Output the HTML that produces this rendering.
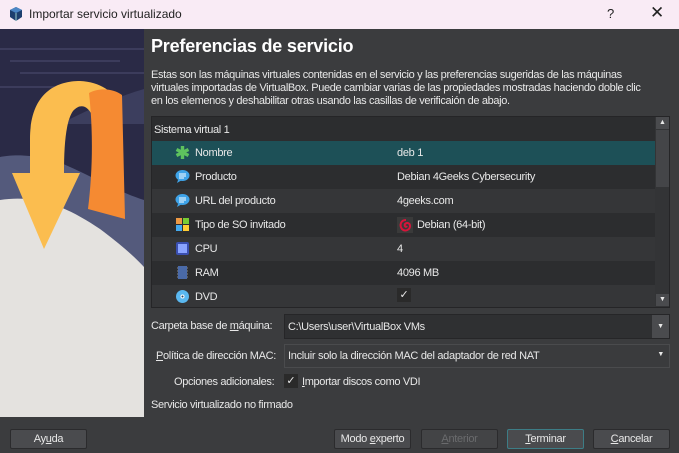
<!DOCTYPE html>
<html><head><meta charset="utf-8"><style>
*{margin:0;padding:0;box-sizing:border-box}
body{width:679px;height:453px;overflow:hidden;background:#3b3c3e;font-family:"Liberation Sans",sans-serif;font-size:11px;color:#e8e8e8;position:relative}
.a{position:absolute;white-space:nowrap}
.t{letter-spacing:-0.35px}
.title{left:0;top:0;width:679px;height:29px;background:#f9ebf5;color:#222;font-size:12px}
.row{position:absolute;left:152px;width:503px;height:24px}
.row .l{position:absolute;left:43px;top:6px;letter-spacing:-0.3px}
.row .v{position:absolute;left:245px;top:6px;letter-spacing:-0.3px}
.row .i{position:absolute;left:23px;top:4px;width:15px;height:15px}
.btn{position:absolute;top:429px;height:20px;width:77px;background:#4a4b4e;border:1px solid #2b2b2d;border-radius:2px;text-align:center;line-height:18px;letter-spacing:-0.3px}
.combo{position:absolute;left:284px;width:386px;background:#2f3032;border:1px solid #262628;letter-spacing:-0.3px}
</style></head><body>
<div class="a title">
 <svg style="position:absolute;left:8px;top:6px" width="16" height="16" viewBox="0 0 16 16"><path d="M8 1 L14 4 L14 11 L8 15 L2 11 L2 4Z" fill="#1d3f6e"/><path d="M8 1 L14 4 L8 7 L2 4Z" fill="#4b86c5"/><path d="M8 7 L8 15" stroke="#9cc" stroke-width="1"/></svg>
 <span style="position:absolute;left:29px;top:7px">Importar servicio virtualizado</span>
 <span style="position:absolute;left:607px;top:6px;font-size:13px">?</span>
 <span style="position:absolute;left:650px;top:3px;font-size:17px">✕</span>
</div>
<svg class="a" style="left:0;top:29px" width="144" height="388" viewBox="0 0 144 388">
 <rect width="144" height="388" fill="#e4e2df"/>
 <path d="M0 0H144V238C135 228 120 215 100 200 70 180 40 165 0 171Z" fill="#545a7c"/>
 <path d="M0 0H144V171C110 160 80 140 50 130 25 125 10 126 0 128Z" fill="#2a2a46"/>
 <path d="M144 60C110 70 80 85 60 95L144 95Z" fill="#3c3e5e"/>
 <path d="M0 20 H144 M10 32 H120 M20 44 H144 M0 58 H100" stroke="#6a6a8f" stroke-width="1.5" opacity=".4"/>
 <path d="M30 144 L30 110 C30 65 55 52 80 52 C100 53 114 62 121 78 L93 88 C88 76 80 74 73 82 C66 92 64 115 64 144 Z" fill="#fbbd4f"/>
 <path d="M12 144 L80 144 L44 220 Z" fill="#fbbd4f"/>
 <path d="M89 64 C100 58 114 60 122 66 L125 190 L88 180 C93 140 93 100 89 64Z" fill="#f58a32"/>
</svg>
<div class="a" style="left:151px;top:36px;font-size:18px;font-weight:bold;color:#fff;letter-spacing:-0.2px">Preferencias de servicio</div>
<div class="a t" style="left:151px;top:69px;line-height:13px">Estas son las máquinas virtuales contenidas en el servicio y las preferencias sugeridas de las máquinas<br>virtuales importadas de VirtualBox. Puede cambiar varias de las propiedades mostradas haciendo doble clic<br>en los elemenos y deshabilitar otras usando las casillas de verificaión de abajo.</div>
<div class="a" style="left:151px;top:116px;width:519px;height:192px;background:#2c2d2f;border:1px solid #252527"></div>
<div class="a t" style="left:154px;top:124px">Sistema virtual 1</div>
<div class="row" style="top:141px;background:#1d5057"><svg class="i" viewBox="0 0 15 15"><path d="M7.5 1V14M1.5 4.5L13.5 10.5M13.5 4.5L1.5 10.5" stroke="#5ec25e" stroke-width="3.4"/></svg><span class="l">Nombre</span><span class="v">deb 1</span></div>
<div class="row" style="top:165px;background:#2c2d2f"><svg class="i" viewBox="0 0 15 15"><ellipse cx="7.5" cy="6.5" rx="7" ry="5.5" fill="#3ea3e8"/><path d="M3 11 L2 14 L7 11Z" fill="#3ea3e8"/><path d="M4 5H11M4 7H11M4 9H9" stroke="#fff" stroke-width="1"/></svg><span class="l">Producto</span><span class="v">Debian 4Geeks Cybersecurity</span></div>
<div class="row" style="top:189px;background:#353638"><svg class="i" viewBox="0 0 15 15"><ellipse cx="7.5" cy="6.5" rx="7" ry="5.5" fill="#3ea3e8"/><path d="M3 11 L2 14 L7 11Z" fill="#3ea3e8"/><path d="M4 5H11M4 7H11M4 9H9" stroke="#fff" stroke-width="1"/></svg><span class="l">URL del producto</span><span class="v">4geeks.com</span></div>
<div class="row" style="top:213px;background:#2c2d2f"><svg class="i" viewBox="0 0 15 15"><rect x="1" y="1" width="6" height="6" fill="#e94"/><rect x="8" y="1" width="6" height="6" fill="#7c3"/><rect x="1" y="8" width="6" height="6" fill="#4ae"/><rect x="8" y="8" width="6" height="6" fill="#fc3"/></svg><span class="l">Tipo de SO invitado</span><span class="v" style="left:265px">Debian (64-bit)</span><svg style="position:absolute;left:245px;top:4px" width="16" height="16" viewBox="0 0 16 16"><rect width="16" height="16" fill="#3a3a3a"/><path d="M9 3C4 3 2 8 5 12 8 15 13 13 13 9 13 6 10 5 8 7 7 9 9 11 10 9" stroke="#d7143a" stroke-width="2" fill="none"/></svg></div>
<div class="row" style="top:237px;background:#353638"><svg class="i" viewBox="0 0 15 15"><rect x="1" y="1" width="13" height="13" rx="2" fill="#3a4fb0"/><rect x="3" y="3" width="9" height="9" fill="#8aa4ff"/></svg><span class="l">CPU</span><span class="v">4</span></div>
<div class="row" style="top:261px;background:#2c2d2f"><svg class="i" viewBox="0 0 15 15"><rect x="3" y="1" width="9" height="13" fill="#4a6aa8"/><path d="M2 3H3M2 6H3M2 9H3M2 12H3M12 3H13M12 6H13M12 9H13M12 12H13" stroke="#888"/></svg><span class="l">RAM</span><span class="v">4096 MB</span></div>
<div class="row" style="top:285px;height:22px;background:#353638"><svg class="i" viewBox="0 0 15 15"><circle cx="7.5" cy="7.5" r="6.5" fill="#5ab8f0"/><circle cx="7.5" cy="7.5" r="2" fill="#fff"/><circle cx="7.5" cy="7.5" r="1" fill="#246"/></svg><span class="l">DVD</span><span class="v" style="left:245px;top:3px;width:14px;height:14px;background:#2a2a2a;text-align:center;line-height:14px">✓</span></div>
<div class="a" style="left:655px;top:117px;width:14px;height:190px;background:#333436"></div>
<div class="a" style="left:656px;top:117px;width:13px;height:12px;background:#4a4b4e;font-size:7px;text-align:center;line-height:12px">▲</div>
<div class="a" style="left:656px;top:130px;width:13px;height:57px;background:#444548"></div>
<div class="a" style="left:656px;top:294px;width:13px;height:12px;background:#4a4b4e;font-size:7px;text-align:center;line-height:12px">▼</div>
<div class="a t" style="left:151px;top:320px">Carpeta base de <u>m</u>áquina:</div>
<div class="combo" style="top:314px;height:25px"><span style="position:absolute;left:3px;top:6px">C:\Users\user\VirtualBox VMs</span><div style="position:absolute;right:0;top:0;width:17px;height:23px;background:#4a4b4e;font-size:7px;text-align:center;line-height:23px">▼</div></div>
<div class="a t" style="left:156px;top:350px"><u>P</u>olítica de dirección MAC:</div>
<div class="combo" style="top:344px;height:24px;background:#3a3b3d;border-color:#4a4b4d"><span style="position:absolute;left:3px;top:5px">Incluir solo la dirección MAC del adaptador de red NAT</span><span style="position:absolute;right:5px;top:6px;font-size:7px">▼</span></div>
<div class="a t" style="left:174px;top:376px">Opciones adicionales:</div>
<div class="a" style="left:284px;top:374px;width:14px;height:14px;background:#2a2a2a;text-align:center;line-height:14px">✓</div>
<div class="a t" style="left:302px;top:376px"><u>I</u>mportar discos como VDI</div>
<div class="a t" style="left:151px;top:399px">Servicio virtualizado no firmado</div>
<div class="btn" style="left:10px">Ay<u>u</u>da</div>
<div class="btn" style="left:334px">Modo <u>e</u>xperto</div>
<div class="btn" style="left:421px;color:#6a6b6d;background:#434446"><u>A</u>nterior</div>
<div class="btn" style="left:507px;border-color:#3d7d86"><u>T</u>erminar</div>
<div class="btn" style="left:593px"><u>C</u>ancelar</div>
</body></html>
